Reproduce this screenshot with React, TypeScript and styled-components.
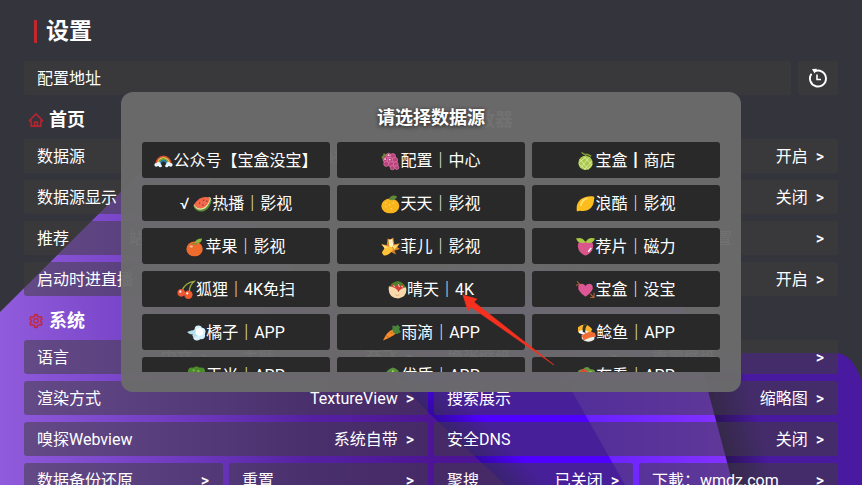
import React from "react";
import styled, { createGlobalStyle } from "styled-components";
import { AiOutlineHome, AiOutlineSetting, AiOutlinePlayCircle } from "react-icons/ai";

const GlobalStyle = createGlobalStyle`
  * { box-sizing: border-box; }
  body {
    margin: 0;
    background: #34343c;
    color: #fff;
    font-family: Roboto, "Noto Sans CJK SC", sans-serif;
    font-size: 16px;
  }
  button { font: inherit; color: inherit; border: 0; cursor: pointer; }
`;

const Page = styled.div`
  position: relative;
  height: 100vh;
  overflow: hidden;
`;

const Wallpaper = styled.svg`
  position: absolute;
  inset: 0;
  width: 100%;
  height: 100%;
`;

const Content = styled.main`
  position: relative;
  padding: 0 24px;
`;

const PageTitle = styled.h1`
  display: flex;
  align-items: center;
  gap: 9px;
  height: 61px;
  margin: 0;
  padding: 2px 0 0 10px;
  font-size: 23px;
  line-height: 24px;
  font-weight: 700;

  &::before {
    content: "";
    width: 3px;
    height: 23px;
    background: #c1272d;
  }
`;

const AddressBar = styled.div`
  display: grid;
  grid-template-columns: 1fr 40px;
  gap: 7px;
`;

const Halves = styled.div`
  display: grid;
  grid-template-columns: 1fr 1fr;
  gap: 0 6px;
`;

const Rows = styled.div`
  display: grid;
  gap: 7px;
`;

const Line = styled.div<{ $columns: number }>`
  display: grid;
  grid-template-columns: repeat(${(p) => p.$columns}, minmax(0, 1fr));
  gap: 6px;
`;

const Heading = styled.h2`
  display: flex;
  align-items: center;
  gap: 5px;
  height: 44px;
  margin: 0;
  padding: 5px 0 0 4px;
  font-size: 18px;
  line-height: 24px;
  font-weight: 700;

  svg {
    color: #c9252f;
    stroke: currentColor;
    stroke-width: 24px;
  }
`;

const Setting = styled.button`
  display: flex;
  align-items: center;
  justify-content: space-between;
  height: 34px;
  padding: 2px 14px 0 13px;
  border-radius: 3px;
  background: rgba(64, 62, 60, 0.52);
  line-height: 24px;
  white-space: nowrap;
  text-align: left;
`;

const Value = styled.span`
  display: flex;
  gap: 8px;
`;

const Chevron = styled.span`
  font-weight: 500;
`;

const HistoryButton = styled(Setting)`
  justify-content: center;
  padding: 0;
`;

const Overlay = styled.div`
  position: absolute;
  inset: 0;
  display: flex;
  align-items: flex-start;
  justify-content: center;
  padding-top: 92px;
`;

const Dialog = styled.section`
  width: 72%;
  max-width: 620px;
  padding: 0 21px 20px;
  border-radius: 12px;
  background: rgba(107, 107, 107, 0.96);
`;

const DialogTitle = styled.h2`
  margin: 0;
  padding-top: 2px;
  font-size: 18px;
  line-height: 48px;
  font-weight: 700;
  text-align: center;
  text-shadow: 0 1px 4px rgba(0, 0, 0, 0.75);
`;

const SourceGrid = styled.div`
  display: grid;
  grid-template-columns: repeat(3, minmax(0, 1fr));
  grid-auto-rows: 36px;
  gap: 7px;
  max-height: 230px;
  overflow: hidden;
`;

const Source = styled.button`
  display: flex;
  align-items: center;
  justify-content: center;
  padding: 2px 0 0;
  border-radius: 3px;
  background: rgba(40, 40, 40, 0.98);
  line-height: 24px;
  white-space: pre;
`;

const Picture = styled.svg`
  width: 19px;
  height: 20px;
  flex: none;
`;

const Pointer = styled.svg`
  position: absolute;
  inset: 0;
  width: 100%;
  height: 100%;
  pointer-events: none;
`;

const emoji: Record<string, React.ReactNode> = {
  rainbow: (
    <g fill="none" strokeWidth="1.6">
      <path d="M2 14a8 9 0 0 1 16 0" stroke="#d9483b" />
      <path d="M3.5 14a6.5 7.5 0 0 1 13 0" stroke="#f2c33d" />
      <path d="M5 14a5 6 0 0 1 10 0" stroke="#6fb04b" />
      <path d="M6.4 14a3.6 4.4 0 0 1 7.2 0" stroke="#2c82b8" />
      <g fill="#e9f8ff" stroke="none">
        <circle cx="2.4" cy="14" r="2" /><circle cx="5" cy="13.3" r="2.2" /><circle cx="6.6" cy="15" r="1.7" />
        <circle cx="17.6" cy="14" r="2" /><circle cx="15" cy="13.3" r="2.2" /><circle cx="13.4" cy="15" r="1.7" />
      </g>
    </g>
  ),
  grapes: (
    <g>
      <path d="M7 4Q3 3 1 7M4 5 3 2" stroke="#718b35" strokeWidth="1.6" fill="none" />
      <g fill="#b9437d" stroke="#ef85b3" strokeWidth=".6">
        <circle cx="8" cy="4.5" r="2.7" /><circle cx="12.5" cy="5" r="2.8" /><circle cx="4.8" cy="8.5" r="2.8" />
        <circle cx="9.5" cy="9" r="2.9" /><circle cx="14.7" cy="9" r="2.8" /><circle cx="5.5" cy="13" r="2.7" />
        <circle cx="10.7" cy="13.5" r="2.8" /><circle cx="15.5" cy="13.3" r="2.6" /><circle cx="12" cy="17" r="2.3" /><circle cx="16.6" cy="16.8" r="2.2" />
      </g>
      <g fill="#ffd4e5"><circle cx="8" cy="4" r="1" /><circle cx="4.3" cy="8" r="1" /><circle cx="9.2" cy="8.5" r="1" /></g>
    </g>
  ),
  melon: (
    <g>
      <circle cx="10" cy="12" r="7.5" fill="#a9c84d" />
      <path d="M4 8l9 11M8 5l9 9M3 13l7 6M5 17 14 6M3 12l8-7M9 19l8-9M13 18l4-5" stroke="#e1efa2" strokeWidth=".9" />
      <path d="M6 1q2 3 6 2l4 2M10 5V3" stroke="#819d36" strokeWidth="1.5" fill="none" />
    </g>
  ),
  watermelon: (
    <g>
      <path d="M.5 11C1 20 17 22 19.500 6L18 3Z" fill="#5c8b35" />
      <path d="M.8 11C4 19 16 18 18.800 4L17.500 2.500Z" fill="#e2edb0" />
      <path d="M1 10.500C5 17.500 15.500 16 18 3.500Q8 0 1 10.500Z" fill="#f4694b" />
      <g fill="#5a2925"><circle cx="7" cy="9" r=".7" /><circle cx="11" cy="6" r=".7" /><circle cx="10.5" cy="11" r=".7" /><circle cx="14.5" cy="7" r=".7" /></g>
    </g>
  ),
  tangerine: (
    <g>
      <ellipse cx="9.8" cy="12" rx="9.5" ry="7.8" fill="#f8b51e" />
      <path d="M8 5q3-6 9-3-3 6-9 3" fill="#5f8b39" />
      <g fill="#ffdc72"><circle cx="5" cy="9" r=".8" /><circle cx="9" cy="11" r=".8" /><circle cx="13" cy="9" r=".8" /><circle cx="5" cy="13" r=".8" /><circle cx="11" cy="15" r=".8" /></g>
    </g>
  ),
  lemon: (
    <g>
      <path d="M1 18C-1 8 6 1 18 2q2 0 1 3c0 9-7 14-15 12Z" fill="#fdbd1c" />
      <path d="M5 12Q6 6 12 4" stroke="#ffe37a" strokeWidth="1.6" fill="none" />
    </g>
  ),
  persimmon: (
    <g>
      <ellipse cx="9" cy="12" rx="8.6" ry="7.8" fill="#ef6b2d" />
      <path d="M9 6q1-5 8-5-1 6-8 5" fill="#8eb73d" />
      <path d="M6 6q3 2 6 0" stroke="#7c8d34" strokeWidth="1.300" fill="none" />
      <ellipse cx="5.5" cy="9.500" rx="1.800" ry="1" fill="#ffc09b" />
    </g>
  ),
  banana: (
    <g>
      <path d="M7 1q3 2 6-1l1 7 6-1-3 4 3 2-6 2 2 4-6-3-6 4-3-3 3-5-4-4 6 1Z" fill="#dc872a" />
      <path d="M8 2q2 1 4-1l1 8-4 3Z" fill="#fff1bc" />
      <path d="M1 16q2-5 8-7l4 3q-4 7-10 7Z" fill="#ffc13a" />
      <path d="m12 9 7-2-5 6ZM8 10 1 7l3 5Z" fill="#ffdc72" />
    </g>
  ),
  peach: (
    <g>
      <path d="M10 4q9-2 8 6-1 7-8 9-7-2-8-9-1-8 8-6" fill="#d9568c" />
      <path d="M10 5Q3 8 0 1q7-2 10 4Q13-1 20 1q-3 7-10 4" fill="#a7c843" />
      <path d="m13 15 3-4" stroke="#fff" strokeWidth="1.4" />
    </g>
  ),
  cherries: (
    <g>
      <path d="M5 11Q9 2 18 1Q13 5 13 12" stroke="#9cad3d" strokeWidth="1.3" fill="none" />
      <circle cx="4.5" cy="13" r="4" fill="#ed5735" /><circle cx="12" cy="15" r="4.4" fill="#ef5b2f" />
      <circle cx="3.5" cy="11.8" r="1.2" fill="#fff" /><circle cx="10.8" cy="13.5" r="1.2" fill="#fff" />
    </g>
  ),
  wrap: (
    <g>
      <path d="M2 7Q3 2 10 .5q7 1 9 8L9 12Z" fill="#4d812d" />
      <path d="m3 6 2-2 3 3 2-4 3 3 3-2 1 4-7 4Z" fill="#d33e35" />
      <path d="m6 5 1 2M11 4l1 3M14 6l2 1" stroke="#f5dccb" strokeWidth="1" />
      <path d="M1 6q8 1 10 6 2-4 8-5 2 10-8 12Q-1 18 1 6" fill="#f9d9ac" />
      <path d="M8 15q2 2 4 0" stroke="#d8a873" fill="none" />
    </g>
  ),
  heart: (
    <g>
      <path d="m1 1 4 4M0 5l5-1M15 14l4 4M19 13v5h-4" stroke="#b86339" strokeWidth="1.1" fill="none" />
      <path d="M10 17Q1 11 2.5 6C4 2 9 3 10 6c1-3 6-4 7.5 0Q19 11 10 17Z" fill="#dc5793" />
    </g>
  ),
  dash: (
    <g fill="#d7f1fc">
      <circle cx="12" cy="6" r="4" /><circle cx="15.5" cy="8.5" r="4" /><circle cx="15" cy="12.5" r="4" /><circle cx="10.5" cy="14" r="4" /><circle cx="10" cy="10" r="4" />
      <path d="M0 9q6-3 12-2v6q-4 2-7 0l4-2q-5 2-9-2" fill="#b6ddeb" />
      <circle cx="13" cy="9" r="4" fill="#fff" />
    </g>
  ),
  carrot: (
    <g>
      <path d="M1 18Q5 8 12 6l3 4Q11 14 1 18" fill="#f58b2a" />
      <path d="m5 13 2 2M9 9l2 2" stroke="#bd621d" />
      <path d="m11 7 0-5 4 1 1-2 3 3-1 2 2 3-4 2-4-1Z" fill="#46863b" />
    </g>
  ),
  sushi: (
    <g>
      <path d="M1 6q7-6 13 1l2 3-7 3-7-3Z" fill="#fff" />
      <path d="M1 4q8-7 15 2l-2 4Q7 4 1 9Z" fill="#f9b52c" />
      <path d="m7 1 4 0q-3 4-2 9l-3-1Q5 5 7 1Z" fill="#2d352d" />
      <path d="M5 12v4q6 6 13 1l1-5Z" fill="#f1f1eb" />
      <path d="M5 13q6-6 14-3l1 4q-7 0-13 4Z" fill="#f16c35" />
    </g>
  ),
  broccoli: (
    <g>
      <path d="M8 9h5l2 10H8Z" fill="#88b747" />
      <g fill="#4b8b2c"><circle cx="5" cy="5" r="4" /><circle cx="10" cy="4" r="4" /><circle cx="15" cy="5" r="4" /><circle cx="4" cy="9" r="4" /><circle cx="16" cy="10" r="3.5" /></g>
      <g fill="#82ba3c"><circle cx="7" cy="4" r="1.2" /><circle cx="12" cy="5" r="1.2" /></g>
    </g>
  ),
  leaf: (
    <g>
      <path d="M4 18Q0 5 11 1q9 2 7 10-3 5-12 8" fill="#56913a" />
      <path d="M5 17 12 4M7 12l7-4M7 9 5 6" stroke="#c1de83" strokeWidth="1.3" />
    </g>
  ),
  salad: (
    <g>
      <path d="M1 8q-1-5 5-5 5-5 8 0 6-1 5 6Z" fill="#62973b" />
      <circle cx="7" cy="6" r="3.5" fill="#df493a" /><path d="M10 8q4-6 7-1" fill="#a4c446" />
      <path d="M1 9h18q-2 10-9 10T1 9" fill="#d9e5e8" />
    </g>
  ),
};

const sources: { icon: string; name: string; active?: boolean }[] = [
  { icon: "rainbow", name: "公众号【宝盒没宝】" },
  { icon: "grapes", name: "配置｜中心" },
  { icon: "melon", name: "宝盒┃商店" },
  { icon: "watermelon", name: "热播｜影视", active: true },
  { icon: "tangerine", name: "天天｜影视" },
  { icon: "lemon", name: "浪酷｜影视" },
  { icon: "persimmon", name: "苹果｜影视" },
  { icon: "banana", name: "菲儿｜影视" },
  { icon: "peach", name: "荐片｜磁力" },
  { icon: "cherries", name: "狐狸｜4K免扫" },
  { icon: "wrap", name: "晴天｜4K" },
  { icon: "heart", name: "宝盒｜没宝" },
  { icon: "dash", name: "橘子｜APP" },
  { icon: "carrot", name: "雨滴｜APP" },
  { icon: "sushi", name: "鲶鱼｜APP" },
  { icon: "broccoli", name: "玉米｜APP" },
  { icon: "leaf", name: "优质｜APP" },
  { icon: "salad", name: "在看｜APP" },
];

type Item = [label: string, value?: string];

const homeRows: Item[][] = [
  [["数据源", "热播｜影视"]],
  [["数据源显示", "开启"], ["按钮位置", ""]],
  [["推荐", "站点推荐"], ["历史条数", "100条"]],
  [["启动时进直播", "关闭"]],
];
const playerRows: Item[][] = [
  [["窗口预览", "开启"]],
  [["画面缩放", "默认"], ["后台", "关闭"]],
  [["播放器", "IJK"], ["播放器设置"]],
  [["广告过滤", "开启"]],
];
const systemLeft: Item[][] = [
  [["语言", "中文"], ["主题", "奈飞"]],
  [["渲染方式", "TextureView"]],
  [["嗅探Webview", "系统自带"]],
  [["数据备份还原"], ["重置"]],
];
const systemRight: Item[][] = [
  [["换张壁纸"], ["重置壁纸"]],
  [["搜索展示", "缩略图"]],
  [["安全DNS", "关闭"]],
  [["聚搜", "已关闭"], ["下載：wmdz.com"]],
];

function SettingRows({ rows }: { rows: Item[][] }) {
  return (
    <Rows>
      {rows.map((row, i) => (
        <Line key={i} $columns={row.length}>
          {row.map(([label, value]) => (
            <Setting key={label}>
              <span>{label}</span>
              <Value>
                {value && <span>{value}</span>}
                <Chevron>&gt;</Chevron>
              </Value>
            </Setting>
          ))}
        </Line>
      ))}
    </Rows>
  );
}

function Background() {
  return (
    <Wallpaper viewBox="0 0 862 485" preserveAspectRatio="none" aria-hidden="true">
      <defs>
        <linearGradient id="left" gradientUnits="userSpaceOnUse" x1="0" y1="0" x2="430" y2="0">
          <stop offset="0" stopColor="#905cdc" />
          <stop offset=".45" stopColor="#6d38bd" />
          <stop offset=".72" stopColor="#5521a2" />
          <stop offset="1" stopColor="#4d1596" />
        </linearGradient>
        <linearGradient id="violet" gradientUnits="userSpaceOnUse" x1="570" y1="0" x2="730" y2="0">
          <stop offset="0" stopColor="#671fff" />
          <stop offset="1" stopColor="#8332ff" />
        </linearGradient>
        <linearGradient id="blue" gradientUnits="userSpaceOnUse" x1="455" y1="440" x2="480" y2="415">
          <stop offset="0" stopColor="#3208a0" />
          <stop offset="1" stopColor="#5000ff" />
        </linearGradient>
        <linearGradient id="deep" gradientUnits="userSpaceOnUse" x1="712" y1="430" x2="758" y2="418">
          <stop offset="0" stopColor="#27114f" />
          <stop offset="1" stopColor="#49199f" />
        </linearGradient>
      </defs>
      <path d="M560 485V353H835Q853 353 862 382V485Z" fill="url(#deep)" />
      <path d="M350 485 430 270Q650 260 680 300Q690 320 733 485Z" fill="url(#violet)" />
      <path d="M400 485V310L525 308 625 485Z" fill="url(#blue)" />
      <path d="M0 485V312L142 171Q175 140 210 180L428 412 505 485Z" fill="url(#left)" />
    </Wallpaper>
  );
}

export default function App() {
  return (
    <Page>
      <GlobalStyle />
      <Background />
      <Content>
        <PageTitle>设置</PageTitle>
        <AddressBar>
          <Setting>配置地址</Setting>
          <HistoryButton aria-label="历史记录">
            <svg width="20" height="20" viewBox="0 0 20 20" fill="none" stroke="#fff" strokeWidth="1.9">
              <path d="M6.5 3.3A8 8 0 1 1 3.5 5.800" />
              <path d="M9 6.5V11.500H13" strokeWidth="1.6" />
              <path d="M4 1 9 .8 6.6 5.600Z" fill="#fff" stroke="none" />
            </svg>
          </HistoryButton>
        </AddressBar>
        <Halves>
          <Heading><AiOutlineHome size={16} />首页</Heading>
          <Heading><AiOutlinePlayCircle size={16} />播放器</Heading>
          <SettingRows rows={homeRows} />
          <SettingRows rows={playerRows} />
        </Halves>
        <Heading><AiOutlineSetting size={16} />系统</Heading>
        <Halves>
          <SettingRows rows={systemLeft} />
          <SettingRows rows={systemRight} />
        </Halves>
      </Content>
      <Overlay>
        <Dialog role="dialog" aria-modal="true" aria-labelledby="source-title">
          <DialogTitle id="source-title">请选择数据源</DialogTitle>
          <SourceGrid>
            {sources.map((s) => (
              <Source key={s.name} aria-pressed={!!s.active}>
                {s.active && <span>√ </span>}
                <Picture viewBox="0 0 20 20" aria-hidden="true">{emoji[s.icon]}</Picture>
                <span>{s.name}</span>
              </Source>
            ))}
          </SourceGrid>
        </Dialog>
      </Overlay>
      <Pointer viewBox="0 0 862 485" preserveAspectRatio="none" aria-hidden="true">
        <path d="M463 295 477 299 474 302 554 365 471 307 468 311Z" fill="#f5301f" stroke="#f5301f" strokeWidth=".6" />
      </Pointer>
    </Page>
  );
}
